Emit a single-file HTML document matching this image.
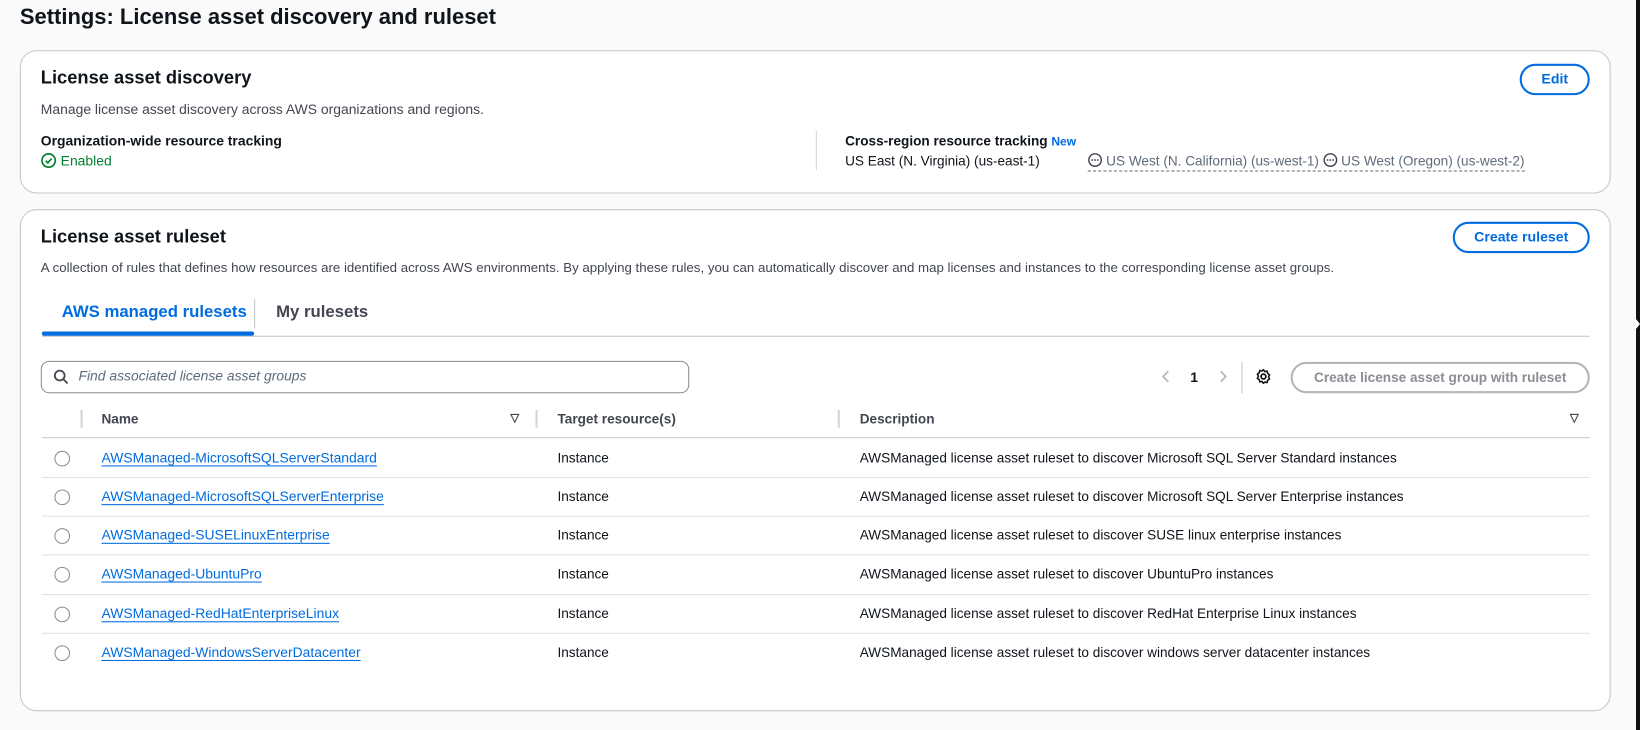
<!DOCTYPE html>
<html><head><meta charset="utf-8"><style>
*{box-sizing:border-box;margin:0;padding:0}
body{width:1640px;height:730px;background:#fafafa;font-family:"Liberation Sans",sans-serif;color:#0f141a;position:relative;overflow:hidden;font-size:13px}
#w{position:absolute;left:0;top:0;width:1568px;height:698px;transform:scale(1.0459);transform-origin:0 0}
.a{position:absolute;white-space:nowrap}
.card{position:absolute;left:19px;width:1521px;background:#fff;border:1px solid #c6c6cd;border-radius:16px}
.b{font-weight:bold}
.btn{position:absolute;border:2px solid #006ce0;border-radius:20px;color:#006ce0;font-weight:bold;font-size:13.5px;text-align:center;background:#fff}
.link{color:#006ce0;text-decoration:underline;text-underline-offset:3px;font-size:13.3px}
.radio{position:absolute;left:52px;width:15px;height:15px;border:1.5px solid #8c8c94;border-radius:50%}
.sep{position:absolute;left:40px;width:1480px;height:1px;background:#e0e0e5}
</style></head><body>
<div id="w">
<div class="a b" style="left:19px;top:5px;font-size:21px">Settings: License asset discovery and ruleset</div>

<div class="card" style="top:48px;height:137px"></div>
<div class="a b" style="left:39px;top:64px;font-size:17.5px">License asset discovery</div>
<div class="btn" style="left:1453px;top:61px;width:67px;height:30px;line-height:26px">Edit</div>
<div class="a" style="left:39px;top:97px;color:#424650;font-size:13.3px">Manage license asset discovery across AWS organizations and regions.</div>
<div class="a b" style="left:39px;top:127px;font-size:13.3px">Organization-wide resource tracking</div>
<div class="a" style="left:39px;top:146px;color:#00802f;font-size:13.3px"><svg width="15" height="15" viewBox="0 0 16 16" style="vertical-align:-3px;margin-right:4px"><circle cx="8" cy="8" r="6.8" fill="none" stroke="#00802f" stroke-width="1.7"/><path d="M5 8.2l2.2 2.2L11 6" fill="none" stroke="#00802f" stroke-width="1.7"/></svg>Enabled</div>
<div class="a" style="left:780px;top:125px;width:1px;height:38px;background:#d5d5dc"></div>
<div class="a b" style="left:808px;top:127px;font-size:13px">Cross-region resource tracking <span style="color:#006ce0;font-size:11.5px">New</span></div>
<div class="a" style="left:808px;top:146px;font-size:13px">US East (N. Virginia) (us-east-1)</div>
<div class="a" style="left:1040px;top:146px;font-size:13px;color:#5f6b7a;border-bottom:1px dashed #5f6b7a;padding-bottom:2px"><svg width="14" height="14" viewBox="0 0 16 16" style="vertical-align:-2px"><circle cx="8" cy="8" r="6.8" fill="none" stroke="#424650" stroke-width="1.6"/><circle cx="5" cy="8" r="1" fill="#424650"/><circle cx="8" cy="8" r="1" fill="#424650"/><circle cx="11" cy="8" r="1" fill="#424650"/></svg> US West (N. California) (us-west-1) <svg width="14" height="14" viewBox="0 0 16 16" style="vertical-align:-2px"><circle cx="8" cy="8" r="6.8" fill="none" stroke="#424650" stroke-width="1.6"/><circle cx="5" cy="8" r="1" fill="#424650"/><circle cx="8" cy="8" r="1" fill="#424650"/><circle cx="11" cy="8" r="1" fill="#424650"/></svg> US West (Oregon) (us-west-2)</div>

<div class="card" style="top:200px;height:480px"></div>
<div class="a b" style="left:39px;top:216px;font-size:17.5px">License asset ruleset</div>
<div class="btn" style="left:1389px;top:212px;width:131px;height:30px;line-height:26px">Create ruleset</div>
<div class="a" style="left:39px;top:249px;color:#424650;font-size:12.7px">A collection of rules that defines how resources are identified across AWS environments. By applying these rules, you can automatically discover and map licenses and instances to the corresponding license asset groups.</div>
<div class="a b" style="left:59px;top:290px;font-size:16px;color:#006ce0">AWS managed rulesets</div>
<div class="a" style="left:243px;top:286px;width:1px;height:28px;background:#c6c6cd"></div>
<div class="a b" style="left:264px;top:290px;font-size:16px;color:#424650">My rulesets</div>
<div class="a" style="left:40px;top:321px;width:1480px;height:1px;background:#c6c6cd"></div>
<div class="a" style="left:40px;top:317px;width:203px;height:4px;background:#006ce0;border-radius:2px"></div>

<div class="a" style="left:39px;top:345px;width:620px;height:31px;border:1px solid #8c8c94;border-radius:8px"></div>
<svg class="a" style="left:51px;top:353px" width="15" height="15" viewBox="0 0 16 16"><circle cx="6.5" cy="6.5" r="5" fill="none" stroke="#424650" stroke-width="1.8"/><path d="M10 10l4.5 4.5" stroke="#424650" stroke-width="1.8"/></svg>
<div class="a" style="left:75px;top:352px;font-style:italic;color:#5f6b7a;font-size:13.3px">Find associated license asset groups</div>
<svg class="a" style="left:1110px;top:353px" width="10" height="14" viewBox="0 0 10 14"><path d="M7 2L2 7l5 5" fill="none" stroke="#b4b4bb" stroke-width="1.6"/></svg>
<div class="a b" style="left:1138px;top:353px;font-size:13.5px">1</div>
<svg class="a" style="left:1164px;top:353px" width="10" height="14" viewBox="0 0 10 14"><path d="M3 2l5 5-5 5" fill="none" stroke="#b4b4bb" stroke-width="1.6"/></svg>
<div class="a" style="left:1187px;top:346px;width:1px;height:30px;background:#c6c6cd"></div>
<svg class="a" style="left:1200px;top:352px" width="16" height="16" viewBox="0 0 16 16"><circle cx="8" cy="8" r="2.3" fill="none" stroke="#0f141a" stroke-width="1.6"/><path d="M8 1.5l1.3 1.8 2.2-.5.5 2.2 1.8 1.3-1 2 1 2-1.8 1.3-.5 2.2-2.2-.5L8 14.5l-1.3-1.8-2.2.5-.5-2.2-1.8-1.3 1-2-1-2 1.8-1.3.5-2.2 2.2.5z" fill="none" stroke="#0f141a" stroke-width="1.5" stroke-linejoin="round"/></svg>
<div class="a b" style="left:1234px;top:346px;width:286px;height:30px;border:2px solid #b4b4bb;border-radius:16px;color:#8c8c94;text-align:center;line-height:26px;font-size:13px">Create license asset group with ruleset</div>

<div class="a" style="left:77px;top:392px;width:2px;height:17px;background:#d5d5dc"></div>
<div class="a b" style="left:97px;top:393px;color:#424650">Name</div>
<div class="a" style="left:488px;top:393px;font-size:11px;color:#424650;font-weight:bold">&#9661;</div>
<div class="a" style="left:512px;top:392px;width:2px;height:17px;background:#d5d5dc"></div>
<div class="a b" style="left:533px;top:393px;color:#424650">Target resource(s)</div>
<div class="a" style="left:801px;top:392px;width:2px;height:17px;background:#d5d5dc"></div>
<div class="a b" style="left:822px;top:393px;color:#424650">Description</div>
<div class="a" style="left:1501px;top:393px;font-size:11px;color:#424650;font-weight:bold">&#9661;</div>
<div class="a" style="left:40px;top:418px;width:1480px;height:1px;background:#c6c6cd"></div>

<div class="radio" style="top:431px"></div><div class="a link" style="left:97px;top:430px">AWSManaged-MicrosoftSQLServerStandard</div><div class="a" style="left:533px;top:430px">Instance</div><div class="a" style="left:822px;top:430px">AWSManaged license asset ruleset to discover Microsoft SQL Server Standard instances</div>
<div class="sep" style="top:456px"></div>
<div class="radio" style="top:468px"></div><div class="a link" style="left:97px;top:467px">AWSManaged-MicrosoftSQLServerEnterprise</div><div class="a" style="left:533px;top:467px">Instance</div><div class="a" style="left:822px;top:467px">AWSManaged license asset ruleset to discover Microsoft SQL Server Enterprise instances</div>
<div class="sep" style="top:493px"></div>
<div class="radio" style="top:505px"></div><div class="a link" style="left:97px;top:504px">AWSManaged-SUSELinuxEnterprise</div><div class="a" style="left:533px;top:504px">Instance</div><div class="a" style="left:822px;top:504px">AWSManaged license asset ruleset to discover SUSE linux enterprise instances</div>
<div class="sep" style="top:530px"></div>
<div class="radio" style="top:542px"></div><div class="a link" style="left:97px;top:541px">AWSManaged-UbuntuPro</div><div class="a" style="left:533px;top:541px">Instance</div><div class="a" style="left:822px;top:541px">AWSManaged license asset ruleset to discover UbuntuPro instances</div>
<div class="sep" style="top:568px"></div>
<div class="radio" style="top:580px"></div><div class="a link" style="left:97px;top:579px">AWSManaged-RedHatEnterpriseLinux</div><div class="a" style="left:533px;top:579px">Instance</div><div class="a" style="left:822px;top:579px">AWSManaged license asset ruleset to discover RedHat Enterprise Linux instances</div>
<div class="sep" style="top:605px"></div>
<div class="radio" style="top:617px"></div><div class="a link" style="left:97px;top:616px">AWSManaged-WindowsServerDatacenter</div><div class="a" style="left:533px;top:616px">Instance</div><div class="a" style="left:822px;top:616px">AWSManaged license asset ruleset to discover windows server datacenter instances</div>
</div>
<div class="a" style="left:1636px;top:0;width:4px;height:730px;background:#111"></div>
<div class="a" style="left:1636px;top:319px;width:0;height:0;border-top:5px solid transparent;border-bottom:5px solid transparent;border-left:4px solid #fff"></div>
</body></html>
